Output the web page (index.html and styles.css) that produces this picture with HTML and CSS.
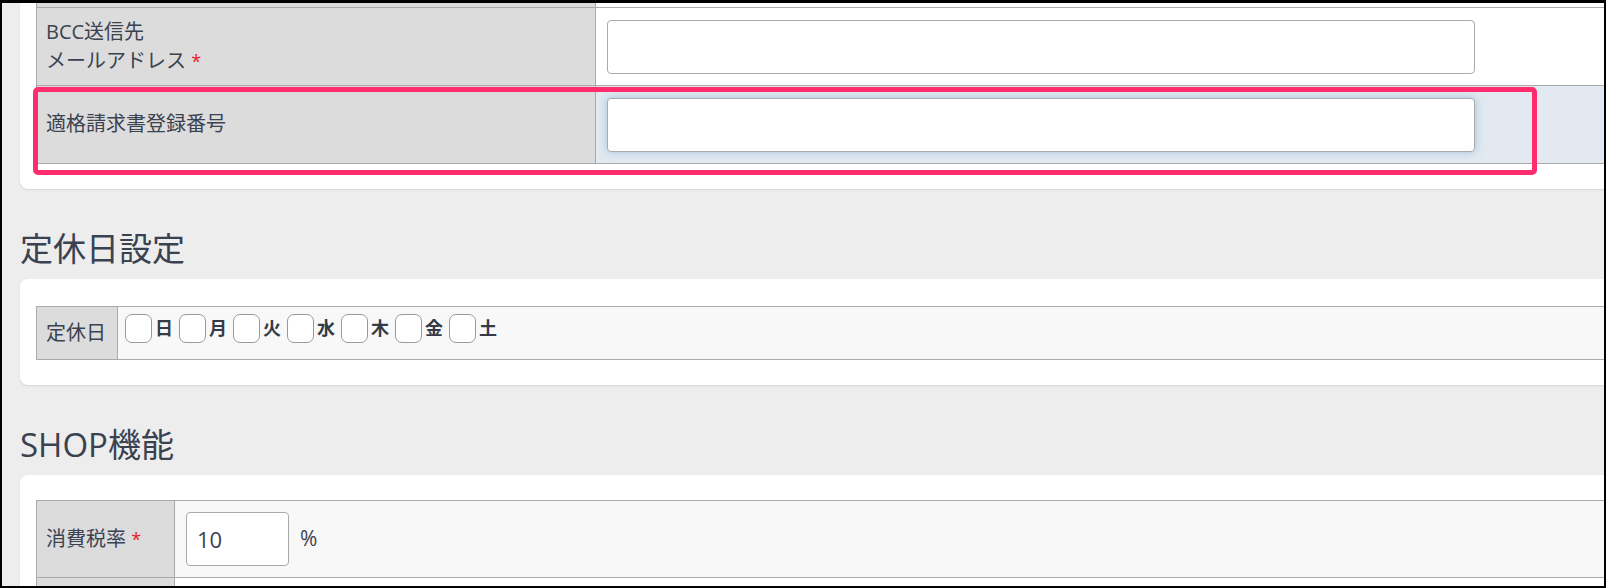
FILE: index.html
```html
<!DOCTYPE html>
<html lang="ja">
<head>
<meta charset="utf-8">
<title>設定</title>
<link rel="stylesheet" href="styles.css">
</head>
<body>
<div class="frame">
  <section class="card card-first">
    <table class="form-table t1">
      <tr class="row-cut"><th></th><td></td></tr>
      <tr class="row-white">
        <th>BCC送信先<br>メールアドレス <span class="req">*</span></th>
        <td><input class="text-input wide" type="text"></td>
      </tr>
      <tr class="row-focus">
        <th>適格請求書登録番号</th>
        <td><input class="text-input wide focused" type="text"></td>
      </tr>
    </table>
    <div class="highlight"></div>
  </section>

  <h2 class="section-title">定休日設定</h2>
  <section class="card card-days">
    <table class="form-table t2">
      <tr>
        <th>定休日</th>
        <td>
          <div class="days">
            <label class="day"><input type="checkbox" class="box"><span>日</span></label>
            <label class="day"><input type="checkbox" class="box"><span>月</span></label>
            <label class="day"><input type="checkbox" class="box"><span>火</span></label>
            <label class="day"><input type="checkbox" class="box"><span>水</span></label>
            <label class="day"><input type="checkbox" class="box"><span>木</span></label>
            <label class="day"><input type="checkbox" class="box"><span>金</span></label>
            <label class="day"><input type="checkbox" class="box"><span>土</span></label>
          </div>
        </td>
      </tr>
    </table>
  </section>

  <h2 class="section-title">SHOP機能</h2>
  <section class="card card-shop">
    <table class="form-table t3">
      <tr>
        <th>消費税率 <span class="req">*</span></th>
        <td>
          <div class="tax">
            <input class="text-input small" type="text" value="10">
            <span class="unit">%</span>
          </div>
        </td>
      </tr>
      <tr class="row-tail"><th></th><td></td></tr>
    </table>
  </section>
</div>
</body>
</html>
```

FILE: styles.css
```css
* { box-sizing: border-box; }

html, body {
  margin: 0;
  padding: 0;
  background: #000;
}

body {
  font-family: "Open Sans", "Noto Sans CJK JP", sans-serif;
  color: #3b4250;
}

.frame {
  width: 1606px;
  height: 588px;
  border-style: solid;
  border-color: #000;
  border-width: 3px 2px 2px 2px;
  background: #ededed;
  overflow: hidden;
}

.card {
  position: relative;
  width: 1640px;
  margin-left: 18px;
  background: #fff;
  border-radius: 8px;
  box-shadow: 0 1px 2px rgba(0, 0, 0, 0.10);
  padding: 27px 16px 25px 16px;
}

.card-first {
  border-radius: 0 0 8px 8px;
  padding-top: 0;
}

.card-shop { padding-top: 25px; }

.section-title {
  margin: 38px 0 8px 18px;
  font-size: 33px;
  line-height: 44px;
  font-weight: 400;
  color: #3a4150;
  letter-spacing: 0;
}

.form-table {
  width: 1608px;
  border-collapse: separate;
  border-spacing: 0;
  border-left: 1px solid #aaa;
  border-top: 1px solid #aaa;
}

.form-table th,
.form-table td {
  border-right: 1px solid #aaa;
  border-bottom: 1px solid #aaa;
  vertical-align: middle;
}

.form-table th {
  background: #dcdcdc;
  font-weight: 400;
  font-size: 20px;
  line-height: 28.5px;
  text-align: left;
  padding: 10px 9px;
  white-space: nowrap;
}

.form-table td {
  background: #f8f8f8;
  padding: 12px 12px 11px 11px;
}

.req {
  color: #e8202a;
  font-size: 18px;
}

/* table 1 */
.t1 { border-top: none; }
.t1 th { width: 559px; }

.t1 .row-cut th,
.t1 .row-cut td {
  height: 5px;
  padding: 0;
}
.t1 .row-cut td { background: #fff; }
.t1 .row-white td { background: #fff; }
.t1 .row-focus td { background: #e2e9f0; }

.text-input {
  display: block;
  height: 54px;
  border: 1px solid #aaa;
  border-radius: 4px;
  background: #fff;
  font-family: "Open Sans", "Noto Sans CJK JP", sans-serif;
  font-size: 22px;
  color: #3b4250;
  padding: 0 10px;
  margin: 0;
  outline: none;
}

.text-input.wide { width: 868px; }
.text-input.small { width: 103px; }

.text-input.focused {
  box-shadow: 0 0 9px rgba(110, 160, 215, 0.55);
}

.highlight {
  position: absolute;
  left: 13px;
  top: 84px;
  width: 1504px;
  height: 88px;
  border: 5px solid #ff2d6e;
  border-radius: 5px;
  pointer-events: none;
}

/* table 2 */
.t2 th { width: 81px; }
.t2 td {
  padding: 7px 7px 16px 7px;
  vertical-align: top;
}

.days {
  display: flex;
  align-items: center;
  gap: 5px;
}

.day {
  display: flex;
  align-items: center;
  gap: 3px;
  font-size: 18px;
  font-weight: 700;
  color: #343a46;
  line-height: 29px;
}

.day span { width: 19px; }

.box {
  appearance: none;
  -webkit-appearance: none;
  width: 27px;
  height: 29px;
  margin: 0;
  border: 1px solid #999;
  border-radius: 7px;
  background: #fff;
}

/* table 3 */
.t3 th { width: 138px; }
.t3 td { padding: 11px 12px 11px 11px; }

.tax {
  display: flex;
  align-items: center;
  gap: 11px;
}

.unit {
  font-size: 21px;
  line-height: 28px;
  padding-bottom: 2px;
}

.t3 .row-tail th,
.t3 .row-tail td {
  height: 40px;
  padding: 0;
}
.t3 .row-tail td { background: #fff; }
```
